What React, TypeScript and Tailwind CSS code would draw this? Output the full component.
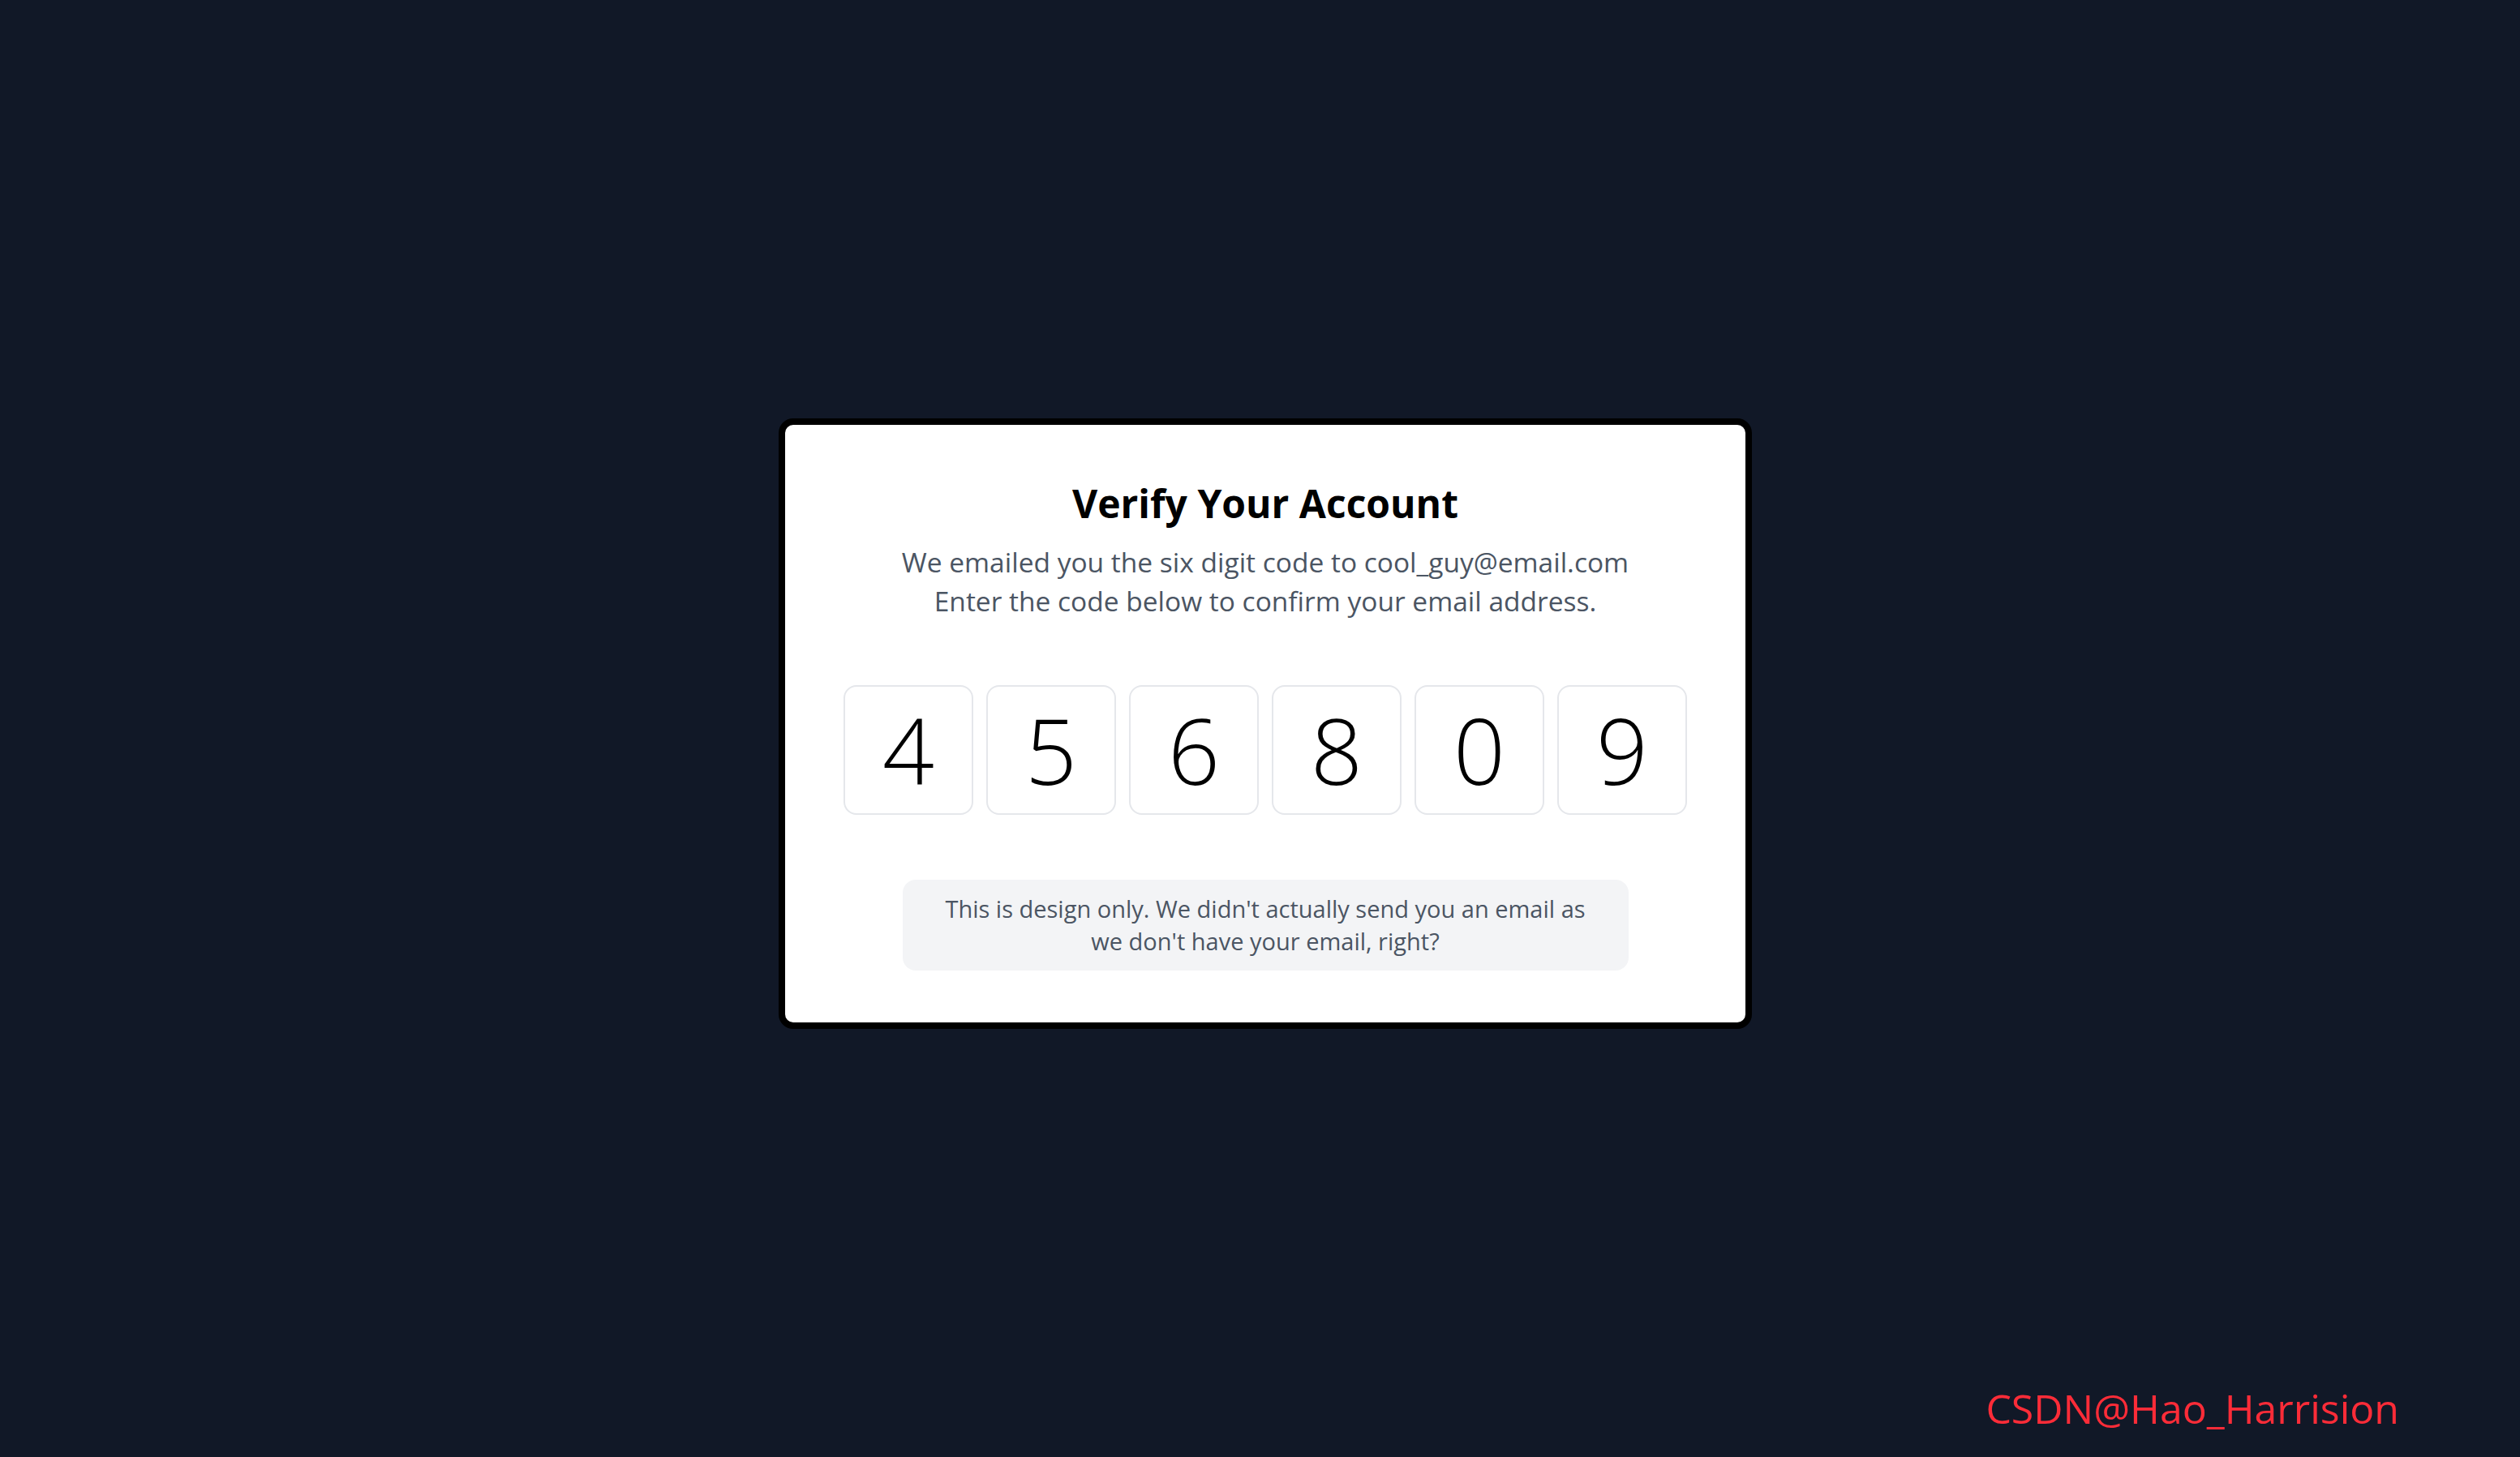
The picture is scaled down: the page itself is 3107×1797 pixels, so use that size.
import { useState } from "react";

const font = "font-['Segoe_UI','Open_Sans','Noto_Sans',sans-serif]";

export default function App() {
  const [code, setCode] = useState(["4", "5", "6", "8", "0", "9"]);

  const handleChange = (index: number, value: string) => {
    const next = [...code];
    next[index] = value.slice(-1);
    setCode(next);
  };

  return (
    <div
      className={`relative w-full min-h-screen bg-[#111827] flex items-center justify-center pl-[13px] pb-[13px] ${font}`}
    >
      <div className="w-[1200px] bg-white border-8 border-black rounded-[18px] flex flex-col items-center pt-[65px] pb-[64px]">
        <h1 className="text-[48px] leading-[64px] font-bold text-black">
          Verify Your Account
        </h1>
        <p className="mt-4 text-[33.5px] leading-[48px] text-[#4b5563] text-center">
          We emailed you the six digit code to cool_guy@email.com
          <br />
          Enter the code below to confirm your email address.
        </p>
        <div className="mt-[80px] flex flex-row gap-4">
          {code.map((digit, i) => (
            <input
              key={i}
              value={digit}
              maxLength={1}
              onChange={(e) => handleChange(i, e.target.value)}
              className="w-[160px] h-[160px] border-2 border-[#e5e7eb] rounded-2xl text-center text-[112px] font-light text-black outline-none"
            />
          ))}
        </div>
        <div className="mt-[80px] w-[895px] bg-[#f3f4f6] rounded-2xl py-[16px] text-[29px] leading-[40px] text-[#4b5563] text-center">
          This is design only. We didn't actually send you an email as
          <br />
          we don't have your email, right?
        </div>
      </div>
      <div className="absolute right-[149px] bottom-[30px] text-[50px] leading-[60px] text-[#fc2c38]">
        CSDN@Hao_Harrision
      </div>
    </div>
  );
}
